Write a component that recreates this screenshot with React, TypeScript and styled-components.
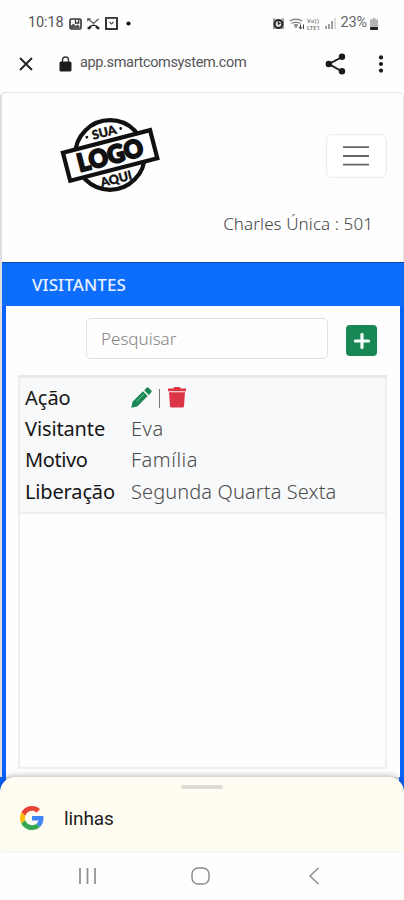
import React from "react";
import styled, { createGlobalStyle } from "styled-components";

const GlobalStyle = createGlobalStyle`
  * { box-sizing: border-box; }
  body { margin: 0; background: #fefefe; font-family: Roboto, "Liberation Sans", sans-serif; }
  svg { display: block; flex: none; }
`;

const Screen = styled.div`
  width: 404px;
  height: 900px;
  overflow: hidden;
  display: flex;
  flex-direction: column;
  background: #fefefe;
`;

const Label = styled.span<{ $size: number; $weight?: number; $color?: string; $track?: number; $plex?: boolean }>`
  font-family: ${(p) => (p.$plex ? '"Noto Sans"' : "Roboto")}, sans-serif;
  font-size: ${(p) => p.$size}px;
  font-weight: ${(p) => p.$weight ?? 400};
  color: ${(p) => p.$color ?? "#212529"};
  letter-spacing: ${(p) => p.$track ?? 0}px;
  line-height: 1;
  white-space: nowrap;
`;

const StatusBar = styled.div`
  height: 47px;
  flex: none;
  padding: 0 24px 0 28px;
  display: flex;
  align-items: center;
`;

const StatusIcons = styled.div<{ $gap: number; $left: number }>`
  display: flex;
  align-items: center;
  gap: ${(p) => p.$gap}px;
  margin-left: ${(p) => p.$left}px;
`;

const UrlBar = styled.div`
  height: 45px;
  flex: none;
  padding: 0 18px 12px;
  display: flex;
  align-items: center;
`;

const Lock = styled.div`
  margin: 0 8px 0 25px;
`;

const UrlActions = styled.div`
  margin-left: auto;
  display: flex;
  align-items: center;
  gap: 30px;
`;

const Page = styled.main`
  height: 685px;
  flex: none;
  border: 1px solid #e4e4e4;
  border-bottom: 0;
  border-left: 2px solid #dfdfdf;
  border-radius: 5px 5px 0 0;
  display: flex;
  flex-direction: column;
`;

const Header = styled.header`
  height: 169px;
  flex: none;
  display: flex;
  justify-content: space-between;
  padding: 22px 16px 0 57px;
`;

const HeaderSide = styled.div`
  display: flex;
  flex-direction: column;
  align-items: flex-end;
  padding-top: 19px;
`;

const MenuButton = styled.button`
  width: 61px;
  height: 44px;
  padding: 0 2px 0 0;
  border: 1.5px solid #ececec;
  border-radius: 7px;
  background: #fff;
  display: flex;
  align-items: center;
  justify-content: center;
`;

const UserName = styled.div`
  margin: 37px 14px 0 0;
  display: flex;
`;

const Panel = styled.section`
  flex: 1;
  margin-right: -1px;
  border: 4px solid #0a62fa;
  border-top: 0;
  border-bottom: 0;
  display: flex;
  flex-direction: column;
  background: #fefefe;
`;

const PanelTitle = styled.div`
  height: 44px;
  flex: none;
  margin: 0 -4px;
  padding: 0 30px;
  border-top: 1px solid #0c46a5;
  background: #0d6efd;
  display: flex;
  align-items: center;
`;

const Tools = styled.div`
  height: 69px;
  flex: none;
  padding: 12px 23px 0 80px;
  display: flex;
  justify-content: space-between;
`;

const Search = styled.div`
  width: 242px;
  height: 41px;
  padding: 0 14px;
  border: 1.5px solid #dfe0e2;
  border-radius: 5px;
  display: flex;
  align-items: center;
`;

const AddButton = styled.button`
  width: 31px;
  height: 31px;
  margin-top: 7px;
  padding: 0;
  border: 0;
  border-radius: 4px;
  background: #198754;
  display: flex;
  align-items: center;
  justify-content: center;
`;

const Table = styled.div`
  height: 394px;
  flex: none;
  margin: 0 13px 0 12px;
  border: 2px solid #eeeff0;
  border-top: 3px solid #e6e8ea;
`;

const Card = styled.div`
  height: 136px;
  padding: 4px 5px 0;
  background: #f8f9fa;
  border-bottom: 2px solid #eceeef;
`;

const Row = styled.div`
  height: 31.4px;
  display: grid;
  grid-template-columns: 106px 1fr;
  align-items: center;
`;

const Actions = styled.div`
  display: flex;
  align-items: center;
`;

const Divider = styled.i`
  width: 1px;
  height: 19px;
  margin: 2px 7px 0;
  background: #777;
`;

const SheetBack = styled.div`
  height: 74px;
  flex: none;
  background: linear-gradient(90deg, #0a62fa 6px, #e9e9e9 6px 399px, #0a62fa 399px);
`;

const Sheet = styled.div`
  height: 74px;
  padding: 8px 20px 0;
  background: #fffcf1;
  border-radius: 15px 15px 0 0;
  box-shadow: 0 -2px 5px rgba(0, 0, 0, 0.22);
`;

const Handle = styled.div`
  width: 42px;
  height: 4px;
  margin: 0 auto;
  border-radius: 2px;
  background: #dedcd2;
`;

const SheetRow = styled.div`
  height: 58px;
  display: flex;
  align-items: center;
  gap: 20px;
`;

const NavBar = styled.nav`
  flex: 1;
  padding: 1px 84px 0 78px;
  display: grid;
  grid-template-columns: 113px 1fr auto;
  align-items: center;
`;

const Logo = () => (
  <svg width="104" height="84" viewBox="0 0 104 84">
    <circle cx="51" cy="40" r="34.8" fill="#fff" stroke="#111" strokeWidth="4.2" />
    <g transform="rotate(-14.5 51 40)" fontFamily="Lato, sans-serif" fontWeight="900" fill="#111" textAnchor="middle">
      <rect x="6" y="26" width="90" height="29" fill="#fff" stroke="#111" strokeWidth="4.2" />
      <text x="51" y="49" fontSize="24.5" textLength="67" lengthAdjust="spacingAndGlyphs" stroke="#111" strokeWidth="2.1" strokeLinejoin="round">LOGO</text>
      <text x="51" y="21" fontSize="12.5" textLength="25" stroke="#111" strokeWidth=".4">SUA</text>
      <text x="51" y="69" fontSize="12.5" textLength="32" stroke="#111" strokeWidth=".4">AQUI</text>
      <circle cx="33" cy="17" r="1.4" />
      <circle cx="68" cy="17" r="1.4" />
    </g>
  </svg>
);

const fields = [
  { name: "Visitante", track: -0.12, value: "Eva", valueTrack: 0.5 },
  { name: "Motivo", track: -0.4, value: "Família", valueTrack: 0.5 },
  { name: "Liberação", track: -0.15, value: "Segunda Quarta Sexta", valueTrack: 0.1 },
];

export default function App() {
  return (
    <Screen>
      <GlobalStyle />
      <StatusBar>
        <Label $size={14.5} $color="#555" $track={-0.1}>10:18</Label>
        <StatusIcons $gap={5} $left={5}>
          <svg width="13" height="12" viewBox="0 0 13 12"><rect x="1" y="1" width="11" height="10" rx="1.5" fill="#fff" stroke="#333" strokeWidth="1.6" /><path d="M2 10V7.5l2.5-2 2 2.5 2-1.5 2 1.5V10z" fill="#555" /><path d="M6.5 1.5V5h3.2V1.5" stroke="#333" strokeWidth="1.3" fill="none" /></svg>
          <svg width="13" height="12" viewBox="0 0 13 12"><path d="m1.5 1 5 4.5L11.5 1M.8 3.5V.8h2.7" fill="none" stroke="#555" strokeWidth="1.2" /><path d="M0 10Q6.5 3 13 10l-2 1.7L8.5 9.5V8h-4v1.5L2 11.7z" fill="#222" /></svg>
          <svg width="13" height="13" viewBox="0 0 13 13"><rect x="1" y="1" width="11" height="11" fill="#fff" stroke="#222" strokeWidth="1.8" /><path d="M1 1.5h11M4.5 5l2 2 2-2" fill="none" stroke="#555" strokeWidth="1.2" /></svg>
        </StatusIcons>
        <StatusIcons $gap={0} $left={8}>
          <svg width="5" height="5" viewBox="0 0 5 5"><circle cx="2.5" cy="2.5" r="2.1" fill="#111" /></svg>
        </StatusIcons>
        <StatusIcons $gap={5} $left={142}>
          <svg width="11" height="12" viewBox="0 0 11 12"><path d="M0 .5h3L2 2h7L8 .5h3V11H0z" fill="#999" /><circle cx="5.5" cy="6" r="3.9" fill="#ddd" stroke="#222" strokeWidth="2" /><path d="M5.5 3.2V6l2-1" fill="none" stroke="#222" strokeWidth="1.2" /></svg>
          <svg width="16" height="13" viewBox="0 0 16 13"><path d="M.8 4Q7 .3 13.2 4M2.5 6.5Q7 3.7 11.5 6.5M5 8.5q2-1.5 4 0" fill="none" stroke="#777" strokeWidth="1.4" /><path d="M7 11.5 5.3 9.3h3.4z" fill="#777" /><path d="M11.5 7.5V12M14.5 12V7.5M10 10l1.5 2 1.5-2" fill="none" stroke="#444" /></svg>
        </StatusIcons>
        <StatusIcons $gap={4} $left={1}>
          <svg width="15" height="14" viewBox="0 0 15 14" fontFamily="Roboto, sans-serif" fontWeight="600" fill="#777"><text x="1" y="6" fontSize="5.8" textLength="12">Vo))</text><text x="1" y="13" fontSize="5.8" textLength="13">LTE1</text></svg>
          <svg width="11" height="11" viewBox="0 0 11 11"><path d="M1 8v3M4 6v5M7 3v8" stroke="#888" strokeWidth="1.6" /><path d="M10 0v11" stroke="#ccc" strokeWidth="1.4" /></svg>
        </StatusIcons>
        <StatusIcons $gap={3} $left={5}>
          <Label $size={14.5} $color="#666" $track={-0.2}>23%</Label>
          <svg width="8" height="12" viewBox="0 0 8 12"><path d="M2.5 0h3v1.5H8V9H0V1.5h2.5z" fill="#b4b4b4" /><rect y="9" width="8" height="3" rx=".7" fill="#222" /></svg>
        </StatusIcons>
      </StatusBar>

      <UrlBar>
        <svg width="16" height="16" viewBox="0 0 16 16"><path d="m2 2 12 12M14 2 2 14" stroke="#222" strokeWidth="1.9" /></svg>
        <Lock>
          <svg width="13" height="16" viewBox="0 0 13 16"><rect x=".5" y="5.5" width="12" height="10" rx="1.5" fill="#1c1c1c" /><path d="M3.5 6V4a3 3 0 0 1 6 0v2" fill="none" stroke="#333" strokeWidth="1.4" /></svg>
        </Lock>
        <Label $size={14.5} $color="#555" $track={-0.35}>app.smartcomsystem.com</Label>
        <UrlActions>
          <svg width="21" height="22" viewBox="0 0 21 22" fill="#1a1a1a"><path d="M17 4 4 11l13 7.5" fill="none" stroke="#1a1a1a" strokeWidth="1.9" /><circle cx="17" cy="3.8" r="3.2" /><circle cx="3.8" cy="11" r="3.2" /><circle cx="17" cy="18.2" r="3.2" /></svg>
          <svg width="10" height="18" viewBox="0 0 10 18" fill="#1a1a1a"><circle cx="5" cy="2.4" r="2.1" /><circle cx="5" cy="9" r="2.1" /><circle cx="5" cy="15.6" r="2.1" /></svg>
        </UrlActions>
      </UrlBar>

      <Page>
        <Header>
          <Logo />
          <HeaderSide>
            <MenuButton aria-label="Menu">
              <svg width="26" height="22" viewBox="0 0 26 22"><path d="M0 2.2h26M0 11h26M0 19.7h26" stroke="#666" strokeWidth="1.8" /></svg>
            </MenuButton>
            <UserName><Label $plex $size={17} $weight={300} $color="#444" $track={0.1}>Charles Única : 501</Label></UserName>
          </HeaderSide>
        </Header>
        <Panel>
          <PanelTitle><Label $plex $size={17} $weight={500} $color="#e9f1ff" $track={0.1}>VISITANTES</Label></PanelTitle>
          <Tools>
            <Search><Label $plex $size={17} $weight={300} $color="#858585">Pesquisar</Label></Search>
            <AddButton aria-label="Adicionar">
              <svg width="16" height="16" viewBox="0 0 16 16"><path d="M8 1.5v13M1.5 8h13" stroke="#f6fff9" strokeWidth="3.2" strokeLinecap="round" /></svg>
            </AddButton>
          </Tools>
          <Table>
            <Card>
              <Row>
                <Label $plex $size={20} $color="#161616" $track={0}>Ação</Label>
                <Actions>
                  <svg width="21" height="21" viewBox="0 0 21 21" fill="#198754"><path d="m.3 20.7 1.3-6L12 4.3l4.7 4.7L6.3 19.4zM13.2 3.2l2.2-2.3q1.2-1.2 2.4 0l2.3 2.3q1.2 1.2 0 2.4l-2.3 2.3z" /><path d="m5.5 14.5 7.3-7.1" stroke="#8ccaae" strokeWidth=".8" /></svg>
                  <Divider />
                  <svg width="20" height="21" viewBox="0 0 20 21" fill="#dc3545"><path d="M1 1.5h5L7.5 0h5L14 1.5h5v2.7H1zM2 5.2h16l-1 13.9q-.1 1.5-1.6 1.5H4.6q-1.5 0-1.6-1.5z" /></svg>
                </Actions>
              </Row>
              {fields.map((f) => (
                <Row key={f.name}>
                  <Label $plex $size={20} $color="#161616" $track={f.track}>{f.name}</Label>
                  <Label $plex $size={20} $weight={300} $color="#4c4c4c" $track={f.valueTrack}>{f.value}</Label>
                </Row>
              ))}
            </Card>
          </Table>
        </Panel>
      </Page>

      <SheetBack>
        <Sheet>
          <Handle />
          <SheetRow>
            <svg width="24" height="24" viewBox="0 0 48 48"><path fill="#EA4335" d="M24 9.5c3.54 0 6.71 1.22 9.21 3.6l6.85-6.85C35.9 2.38 30.47 0 24 0 14.62 0 6.51 5.38 2.56 13.22l7.98 6.19C12.43 13.72 17.74 9.5 24 9.5z" /><path fill="#4285F4" d="M46.98 24.55c0-1.57-.15-3.09-.38-4.55H24v9.02h12.94c-.58 2.96-2.26 5.48-4.78 7.18l7.73 6c4.51-4.18 7.09-10.36 7.09-17.65z" /><path fill="#FBBC05" d="M10.53 28.59A14.5 14.5 0 0 1 9.77 24c0-1.6.27-3.14.76-4.59l-7.98-6.19A24 24 0 0 0 0 24c0 3.88.92 7.54 2.56 10.78z" /><path fill="#34A853" d="M24 48c6.48 0 11.93-2.13 15.89-5.81l-7.73-6c-2.15 1.45-4.92 2.3-8.16 2.3-6.26 0-11.57-4.22-13.47-9.91l-7.98 6.19C6.51 42.62 14.62 48 24 48z" /></svg>
            <Label $size={19} $color="#222" $track={-0.1}>linhas</Label>
          </SheetRow>
        </Sheet>
      </SheetBack>
      <NavBar>
        <svg width="19" height="18" viewBox="0 0 19 18"><path d="M2 1v16M9.5 1v16M17 1v16" stroke="#8e8e8e" strokeWidth="1.7" /></svg>
        <svg width="19" height="18" viewBox="0 0 19 18"><rect x="1" y="1" width="17" height="16" rx="6" fill="none" stroke="#8e8e8e" strokeWidth="1.5" /></svg>
        <svg width="12" height="18" viewBox="0 0 12 18"><path d="M10.5 1 2 9l8.5 8" fill="none" stroke="#8e8e8e" strokeWidth="1.5" /></svg>
      </NavBar>
    </Screen>
  );
}
